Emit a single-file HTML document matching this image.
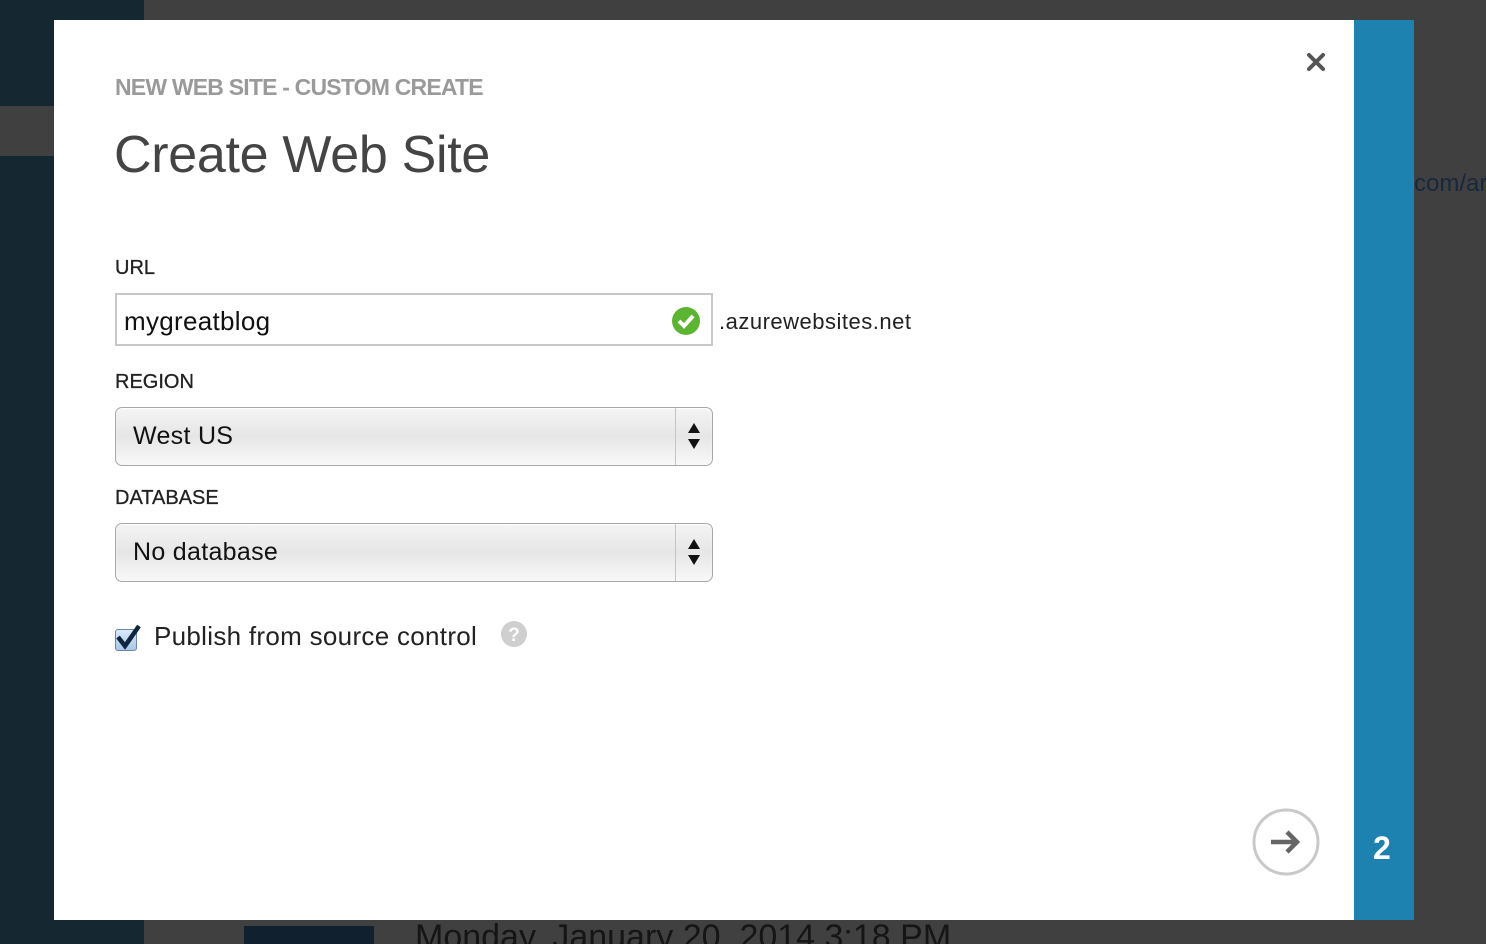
<!DOCTYPE html>
<html><head><meta charset="utf-8"><style>
*{margin:0;padding:0;box-sizing:border-box}
html,body{width:1486px;height:944px;overflow:hidden}
body{background:#404040;position:relative;font-family:"Liberation Sans",sans-serif}
.a{position:absolute}
.sel{position:absolute;left:115px;width:598px;height:59px;border:1px solid #a8a8a8;border-radius:7px;background:linear-gradient(#f4f4f4,#e6e6e6 50%,#f8f8f8);box-shadow:inset 0 1px 1px #fff}
.sel span{position:absolute;left:17px;top:14px;font-size:25px;color:#111;letter-spacing:0.3px}
.sel i{position:absolute;right:36px;top:0;bottom:0;border-left:1px solid #c4c4c4}
.lbl{position:absolute;left:115px;font-size:20px;color:#222;-webkit-text-stroke:0.3px #222}
</style></head><body>
<div class="a" style="left:0;top:0;width:144px;height:944px;background:#152831"></div>
<div class="a" style="left:0;top:106px;width:54px;height:50px;background:#404040"></div>
<div class="a" style="left:1414px;top:170px;font-size:24px;color:#16293a">com/ar</div>
<div class="a" style="left:244px;top:926px;width:130px;height:18px;background:#10202e"></div>
<div class="a" style="left:415px;top:918px;font-size:34px;color:#151515;white-space:nowrap">Monday, January 20, 2014 3:18 PM</div>
<div class="a" style="left:54px;top:20px;width:1300px;height:900px;background:#fff"></div>
<div class="a" style="left:1354px;top:20px;width:60px;height:900px;background:#1e82b0"></div>
<div class="a" style="left:1373px;top:830px;font-size:32px;color:#fff;font-weight:bold">2</div>
<div class="a" style="left:115px;top:74px;font-size:23px;font-weight:bold;color:#9a9a9a;letter-spacing:-0.8px">NEW WEB SITE - CUSTOM CREATE</div>
<div class="a" style="left:114px;top:125px;font-size:52px;color:#444;letter-spacing:-0.3px">Create Web Site</div>
<svg class="a" style="left:1305px;top:51px" width="22" height="22"><path d="M4 4L18 18M18 4L4 18" stroke="#555" stroke-width="4" stroke-linecap="round"/></svg>
<div class="lbl" style="top:257px">URL</div>
<div class="a" style="left:115px;top:293px;width:598px;height:53px;border:2px solid #c8c8c8"></div>
<div class="a" style="left:124px;top:306px;font-size:26px;color:#111;letter-spacing:0.3px">mygreatblog</div>
<svg class="a" style="left:671px;top:306px" width="30" height="30"><circle cx="15" cy="15" r="14" fill="#5cb531"/><path d="M8 15l5 5 9-10" stroke="#fff" stroke-width="4" fill="none"/></svg>
<div class="a" style="left:719px;top:309px;font-size:22px;color:#222;letter-spacing:0.5px">.azurewebsites.net</div>
<div class="lbl" style="top:371px">REGION</div>
<div class="sel" style="top:407px"><span>West US</span><i></i></div>
<div class="lbl" style="top:487px">DATABASE</div>
<div class="sel" style="top:523px"><span>No database</span><i></i></div>
<svg class="a" style="left:686px;top:420px" width="16" height="32"><path d="M2 13L8 3 14 13ZM2 19L8 29 14 19Z" fill="#111"/></svg>
<svg class="a" style="left:686px;top:536px" width="16" height="32"><path d="M2 13L8 3 14 13ZM2 19L8 29 14 19Z" fill="#111"/></svg>
<div class="a" style="left:115px;top:629px;width:22px;height:22px;border:1px solid #6a86a8;border-radius:3px;background:linear-gradient(#dbe9f8,#a9c6e8)"></div>
<svg class="a" style="left:113px;top:622px" width="30" height="30"><path d="M5 15l7 9L26 4" stroke="#0f2540" stroke-width="4.5" fill="none"/></svg>
<div class="a" style="left:154px;top:621px;font-size:26px;color:#222;letter-spacing:0.3px">Publish from source control</div>
<svg class="a" style="left:500px;top:620px" width="28" height="28"><circle cx="14" cy="14" r="13" fill="#cfcfcf"/><text x="14" y="21" font-size="19" font-weight="bold" fill="#fff" text-anchor="middle" font-family="Liberation Sans">?</text></svg>
<svg class="a" style="left:1251px;top:807px" width="70" height="70"><circle cx="35" cy="35" r="32" fill="#fff" stroke="#c9c9c9" stroke-width="3"/><path d="M20 35H46M36 25l10 10-10 10" stroke="#666" stroke-width="4.5" fill="none"/></svg>
</body></html>
